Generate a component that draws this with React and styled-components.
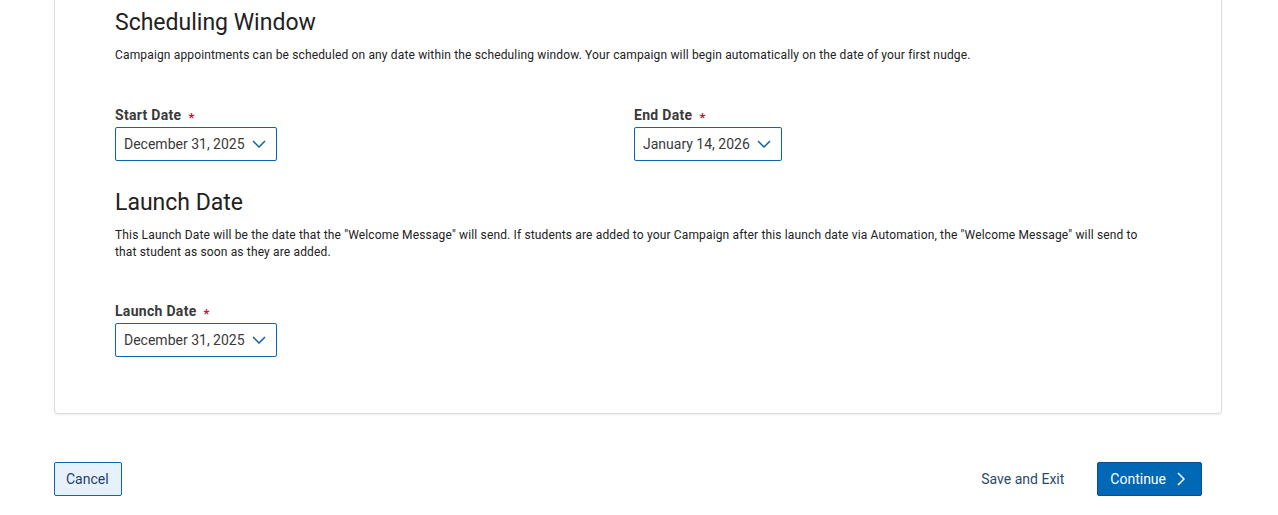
import React from "react";
import styled, { createGlobalStyle } from "styled-components";

const Global = createGlobalStyle`
  html, body { margin: 0; padding: 0; background: #fff; }
  body { font-family: Roboto, "Noto Sans", "Liberation Sans", sans-serif; color: #222; }
`;

const Page = styled.div`
  width: 1278px;
  height: 515px;
  overflow: hidden;
  box-sizing: border-box;
  padding: 0 56px 0 54px;
`;

const Card = styled.section`
  margin-top: -20px;
  background: #fff;
  border: 1px solid #dcdcdc;
  border-radius: 4px;
  box-shadow: 0 1px 2px rgba(0, 0, 0, 0.08);
  padding: 28px 60px 56px 60px;
`;

const Heading = styled.h2`
  margin: 0;
  font-size: 23px;
  line-height: 28px;
  font-weight: 400;
  color: #222;
`;

const Desc = styled.p`
  margin: 10px 0 0;
  font-size: 12px;
  line-height: 17px;
  letter-spacing: 0.15px;
  color: #222;
  max-width: 1040px;
`;

const FieldRow = styled.div`
  display: grid;
  grid-template-columns: 519px 1fr;
  margin-top: ${(p) => p.$mt || 42}px;
`;

const Field = styled.div`
  display: flex;
  flex-direction: column;
  align-items: flex-start;
`;

const Label = styled.label`
  font-size: 14px;
  font-weight: 700;
  letter-spacing: 0.3px;
  color: #3a3a3a;
  line-height: 18px;
  margin-bottom: 3px;
  display: flex;
  align-items: center;
  gap: 7px;
`;

const Req = styled.span`
  color: #c8102e;
  font-size: 13px;
  line-height: 1;
  position: relative;
  top: 2px;
`;

const Select = styled.button`
  display: inline-flex;
  align-items: center;
  gap: 7px;
  height: 34px;
  box-sizing: border-box;
  padding: 0 10px 0 8px;
  border: 1px solid #0d64ad;
  border-radius: 2px;
  background: #fff;
  font-family: inherit;
  font-size: 14px;
  color: #3a3a3a;
  cursor: pointer;
`;

const SectionGap = styled.div`
  height: ${(p) => p.$h}px;
`;

const Footer = styled.div`
  display: flex;
  align-items: center;
  justify-content: space-between;
  margin-top: 48px;
  padding-right: 20px;
`;

const Right = styled.div`
  display: flex;
  align-items: center;
  gap: 33px;
`;

const CancelBtn = styled.button`
  height: 34px;
  padding: 0 12px 0 11px;
  border: 1px solid #0d64ad;
  border-radius: 2px;
  background: #e7f1fb;
  color: #1f3f66;
  font-family: inherit;
  font-size: 14px;
`;

const LinkBtn = styled.button`
  border: 0;
  background: none;
  padding: 0;
  color: #2b4a6b;
  font-family: inherit;
  font-size: 14px;
`;

const PrimaryBtn = styled.button`
  height: 34px;
  display: inline-flex;
  align-items: center;
  gap: 11px;
  padding: 0 16px 0 12px;
  border: 1px solid #0a4f8f;
  border-radius: 2px;
  background: #0068b4;
  color: #fff;
  font-family: inherit;
  font-size: 14px;
`;

const Chevron = ({ dir = "down", color = "#0d64ad" }) =>
  dir === "down" ? (
    <svg width="14" height="8" viewBox="0 0 14 8" fill="none">
      <path d="M1 1 L7 7 L13 1" stroke={color} strokeWidth="1.5" />
    </svg>
  ) : (
    <svg width="8" height="14" viewBox="0 0 8 14" fill="none">
      <path d="M1 1 L7 7 L1 13" stroke={color} strokeWidth="1.5" />
    </svg>
  );

const DateField = ({ label, value }) => (
  <Field>
    <Label>
      {label}
      <Req>*</Req>
    </Label>
    <Select type="button">
      {value}
      <Chevron />
    </Select>
  </Field>
);

export default function App() {
  return (
    <Page>
      <Global />
      <Card>
        <Heading>Scheduling Window</Heading>
        <Desc>
          Campaign appointments can be scheduled on any date within the scheduling window. Your campaign will begin automatically on the date of your first nudge.
        </Desc>
        <FieldRow>
          <DateField label="Start Date" value="December 31, 2025" />
          <DateField label="End Date" value="January 14, 2026" />
        </FieldRow>
        <SectionGap $h={28} />
        <Heading>Launch Date</Heading>
        <Desc>
          This Launch Date will be the date that the "Welcome Message" will send. If students are added to your Campaign after this launch date via Automation, the "Welcome Message" will send to that student as soon as they are added.
        </Desc>
        <FieldRow $mt={41}>
          <DateField label="Launch Date" value="December 31, 2025" />
        </FieldRow>
      </Card>
      <Footer>
        <CancelBtn type="button">Cancel</CancelBtn>
        <Right>
          <LinkBtn type="button">Save and Exit</LinkBtn>
          <PrimaryBtn type="button">
            Continue
            <Chevron dir="right" color="#fff" />
          </PrimaryBtn>
        </Right>
      </Footer>
    </Page>
  );
}
